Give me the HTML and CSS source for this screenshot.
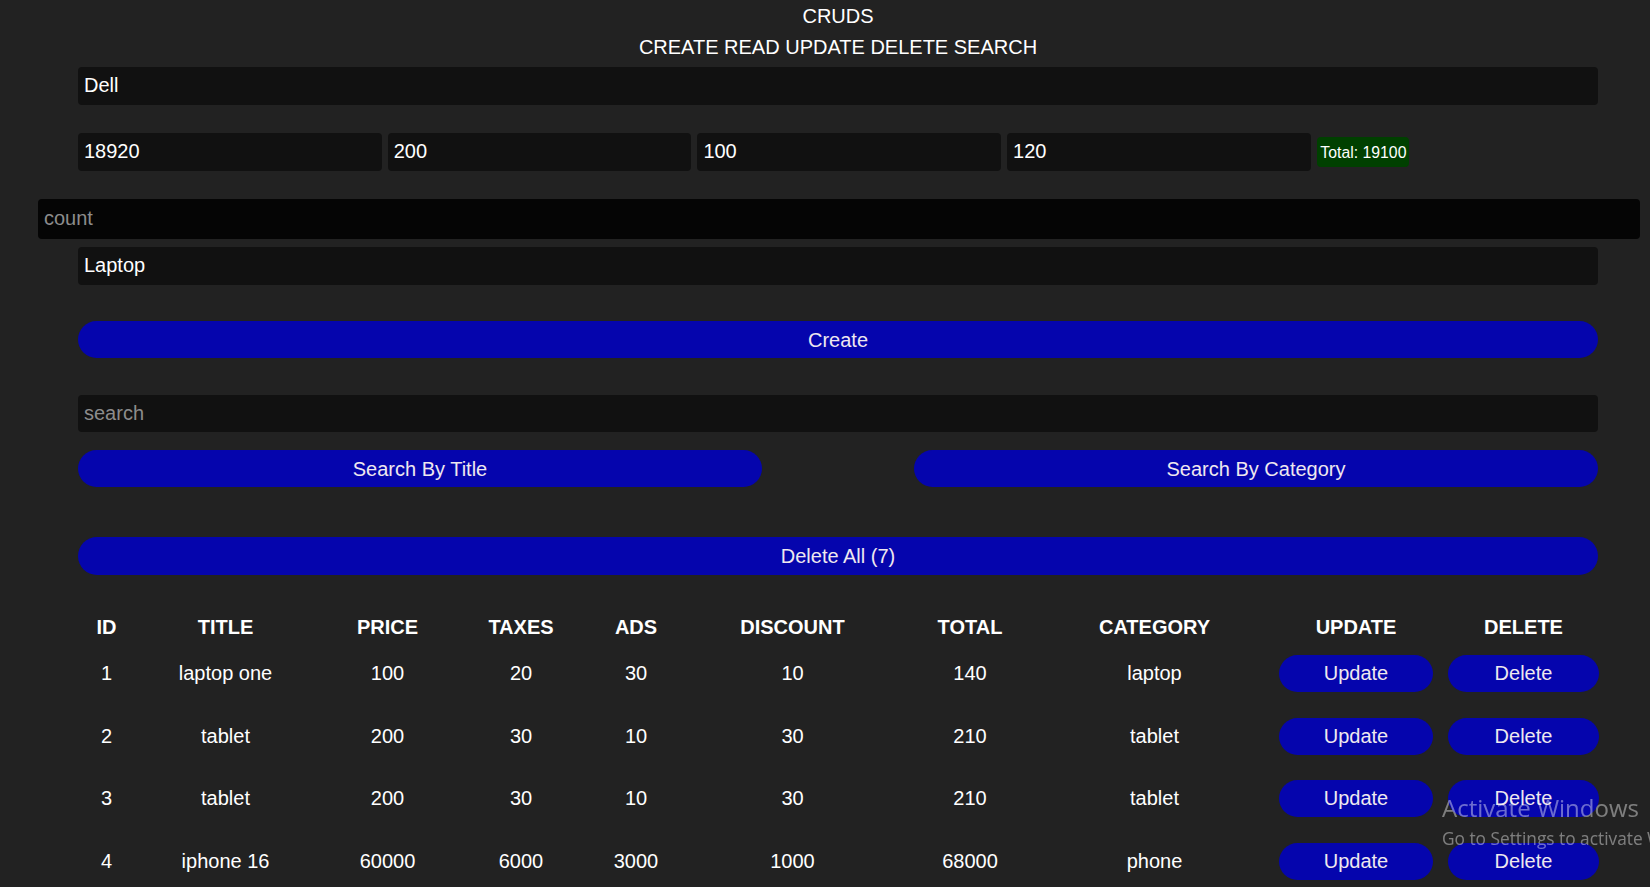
FILE: index.html
```html
<!DOCTYPE html>
<html lang="en">
<head>
<meta charset="utf-8">
<title>CRUDS</title>
<link rel="stylesheet" href="styles.css">
</head>
<body>
<div class="crud">
  <div class="head">
    <div class="head-line">CRUDS</div>
    <div class="head-line">CREATE READ UPDATE DELETE SEARCH</div>
  </div>
  <div class="inputs">
    <input class="field field-title" type="text" value="Dell" placeholder="title">
    <div class="price-row">
      <input class="field field-price" type="number" value="18920" placeholder="price">
      <input class="field field-price" type="number" value="200" placeholder="taxes">
      <input class="field field-price" type="number" value="100" placeholder="ads">
      <input class="field field-price" type="number" value="120" placeholder="discount">
      <small class="total">Total: 19100</small>
    </div>
    <input class="field field-count" type="number" placeholder="count">
    <input class="field field-category" type="text" value="Laptop" placeholder="category">
    <button class="btn btn-create">Create</button>
  </div>
  <div class="search-box">
    <input class="field field-search" type="text" placeholder="search">
    <div class="search-btns">
      <button class="btn btn-half">Search By Title</button>
      <button class="btn btn-half">Search By Category</button>
    </div>
  </div>
  <div class="delete-all">
    <button class="btn btn-delete-all">Delete All (7)</button>
  </div>
  <table class="products">
    <colgroup>
      <col class="c-id"><col class="c-title"><col class="c-price"><col class="c-taxes"><col class="c-ads">
      <col class="c-discount"><col class="c-total"><col class="c-category"><col class="c-update"><col class="c-delete">
    </colgroup>
    <thead>
      <tr>
        <th>ID</th><th>TITLE</th><th>PRICE</th><th>TAXES</th><th>ADS</th>
        <th>DISCOUNT</th><th>TOTAL</th><th>CATEGORY</th><th>UPDATE</th><th>DELETE</th>
      </tr>
    </thead>
    <tbody>
      <tr>
        <td>1</td><td>laptop one</td><td>100</td><td>20</td><td>30</td><td>10</td><td>140</td><td>laptop</td>
        <td><button class="btn btn-row btn-update">Update</button></td>
        <td><button class="btn btn-row btn-delete">Delete</button></td>
      </tr>
      <tr>
        <td>2</td><td>tablet</td><td>200</td><td>30</td><td>10</td><td>30</td><td>210</td><td>tablet</td>
        <td><button class="btn btn-row btn-update">Update</button></td>
        <td><button class="btn btn-row btn-delete">Delete</button></td>
      </tr>
      <tr>
        <td>3</td><td>tablet</td><td>200</td><td>30</td><td>10</td><td>30</td><td>210</td><td>tablet</td>
        <td><button class="btn btn-row btn-update">Update</button></td>
        <td><button class="btn btn-row btn-delete">Delete</button></td>
      </tr>
      <tr>
        <td>4</td><td>iphone 16</td><td>60000</td><td>6000</td><td>3000</td><td>1000</td><td>68000</td><td>phone</td>
        <td><button class="btn btn-row btn-update">Update</button></td>
        <td><button class="btn btn-row btn-delete">Delete</button></td>
      </tr>
    </tbody>
  </table>
</div>
<div class="watermark">
  <div class="wm-title">Activate Windows</div>
  <div class="wm-sub">Go to Settings to activate Windows.</div>
</div>
</body>
</html>
```
FILE: styles.css
```css
html, body {
  margin: 0;
  padding: 0;
  overflow: hidden;
}
body {
  background: #222222;
  color: #ffffff;
  font-family: "Liberation Sans", Arial, sans-serif;
  font-size: 20px;
}
.crud {
  margin: 0 52px 0 78px;
  padding-top: 1.3px;
}
.head {
  text-align: center;
  line-height: 30.5px;
}
.inputs {
  margin-top: 4.7px;
}
.field {
  display: block;
  box-sizing: border-box;
  width: 100%;
  height: 38px;
  border: none;
  outline: none;
  border-radius: 4px;
  background: #111111;
  color: #ffffff;
  font-family: "Liberation Sans", Arial, sans-serif;
  font-size: 20px;
  padding: 7px 6px 8px;
  margin: 0;
}
.field::placeholder {
  color: #8c8c8c;
}
.field::-webkit-outer-spin-button,
.field::-webkit-inner-spin-button {
  -webkit-appearance: none;
  margin: 0;
}
.field[type=number] {
  -moz-appearance: textfield;
}
.price-row {
  display: flex;
  align-items: center;
  gap: 6.2px;
  margin-top: 28px;
}
.field-price {
  width: 303.5px;
  flex: none;
}
.total {
  margin-left: 0.6px;
  background: #004000;
  color: #ffffff;
  font-size: 15.8px;
  height: 30px;
  line-height: 31px;
  padding: 0 3px;
  border-radius: 4px;
}
.field-count {
  margin-top: 28px;
  margin-left: -40px;
  width: calc(100% + 81.5px);
  height: 40px;
  background: #050505;
  padding: 8px 6px 9px;
}
.field-category {
  margin-top: 8px;
}
.btn {
  display: block;
  box-sizing: border-box;
  border: none;
  border-radius: 20px;
  background: #0505ad;
  color: #efe8ef;
  font-family: "Liberation Sans", Arial, sans-serif;
  font-size: 20px;
  height: 37px;
  padding: 2px 0 0;
  margin: 0;
  cursor: pointer;
}
.btn-create {
  width: 100%;
  margin-top: 36px;
}
.search-box {
  margin-top: 37px;
}
.field-search {
  height: 37px;
  padding: 7px 6px 7px;
}
.search-btns {
  display: flex;
  justify-content: space-between;
  margin-top: 18px;
}
.btn-half {
  width: 45%;
}
.delete-all {
  margin-top: 50px;
}
.btn-delete-all {
  width: 100%;
  height: 38px;
}
.products {
  margin-top: 36.3px;
  width: 1522px;
  table-layout: fixed;
  border-collapse: collapse;
  text-align: center;
}
.c-id { width: 57px; }
.c-title { width: 181px; }
.c-price { width: 143px; }
.c-taxes { width: 124px; }
.c-ads { width: 106px; }
.c-discount { width: 207px; }
.c-total { width: 148px; }
.c-category { width: 221px; }
.c-update { width: 182px; }
.c-delete { width: 153px; }
.products th {
  padding: 5px 0 3px;
  line-height: 23px;
  font-weight: bold;
}
.products td {
  padding: 12.8px 0;
  line-height: 23px;
  vertical-align: middle;
}
.btn-row {
  margin: 0 auto;
  padding-top: 0;
}
.btn-update {
  width: 154px;
}
.btn-delete {
  width: 151px;
}
.watermark {
  position: fixed;
  left: 1442px;
  top: 793px;
  white-space: nowrap;
  color: rgba(255, 255, 255, 0.42);
  font-family: "Open Sans", "Noto Sans", sans-serif;
  pointer-events: none;
}
.wm-title {
  font-size: 24px;
  line-height: 30px;
}
.wm-sub {
  font-size: 17.3px;
  line-height: 31px;
}
```
